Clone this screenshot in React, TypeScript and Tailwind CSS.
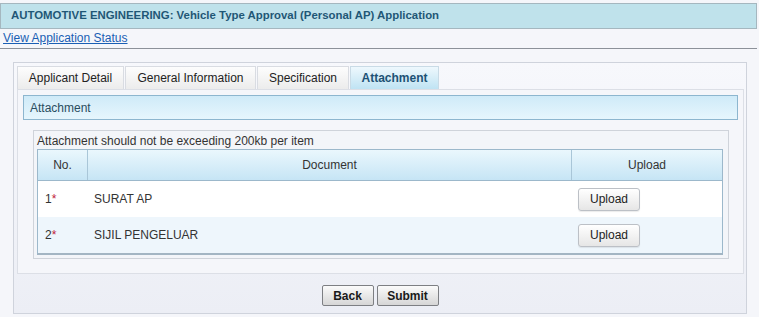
import React from "react";

const tabs = [
  { label: "Applicant Detail", w: "w-[107px]" },
  { label: "General Information", w: "w-[131px]" },
  { label: "Specification", w: "w-[92px]" },
];

function Row({ no, doc, alt }: { no: string; doc: string; alt?: boolean }) {
  return (
    <div className={`flex h-[36px] items-center ${alt ? "bg-[#eef6fc]" : "bg-white"}`}>
      <div className="w-[50px] pl-[7px] text-[#333]">
        {no}
        <span className="text-[#c0203a]">*</span>
      </div>
      <div className="w-[484px] pl-[6px] text-[#333]">{doc}</div>
      <div className="flex-1 pl-[6px]">
        <button className="h-[23px] w-[62px] rounded-[3px] border border-[#bcc0c6] bg-gradient-to-b from-[#ffffff] to-[#e6e6e6] text-[12px] text-[#222] shadow-[0_1px_1px_rgba(0,0,0,0.08)]">
          Upload
        </button>
      </div>
    </div>
  );
}

export default function App() {
  return (
    <div
      className="relative h-[317px] w-[759px] overflow-hidden bg-[#f5f6fa] text-[12px] leading-none"
      style={{ fontFamily: '"Liberation Sans", Arial, sans-serif' }}
    >
      <div className="mr-[2px] mt-[3px] flex h-[26px] items-center border border-[#a5b7bf] bg-[#bfe2eb] pl-[10px] text-[11.4px] font-bold text-[#1f5776]">
        AUTOMOTIVE ENGINEERING: Vehicle Type Approval (Personal AP) Application
      </div>
      <div className="flex h-[17px] items-center pl-[3px]">
        <a className="text-[#1a5fb4] underline" href="#">
          View Application Status
        </a>
      </div>
      <div className="mr-[2px] mt-[2px] border-t border-[#8c9199]" />

      <div className="ml-[13px] mt-[13px] h-[252px] w-[734px] border border-[#cfd3dc] bg-gradient-to-b from-[#f7f8fc] to-[#eceef5] pl-[3px] pt-[3px]">
        <div className="flex h-[23px] gap-[1px]">
          {tabs.map((t) => (
            <div
              key={t.label}
              className={`${t.w} flex items-center justify-center border border-b-0 border-[#d9dce2] bg-gradient-to-b from-[#fdfdfd] to-[#ececec] text-[#222]`}
            >
              {t.label}
            </div>
          ))}
          <div className="flex w-[89px] items-center justify-center border border-b-0 border-[#c9dbe6] bg-gradient-to-b from-[#eef8fd] to-[#bfe3f3] font-bold text-[#1d5275]">
            Attachment
          </div>
        </div>

        <div className="h-[185px] w-[727px] border border-[#dcdfe6] bg-[#f5f6fa] pt-[5px]">
          <div className="ml-[5px] flex h-[25px] w-[715px] items-center border border-[#8db6cf] bg-gradient-to-b from-[#cfeaf8] to-[#e6f6fd] pl-[6px] text-[#2a4d60]">
            Attachment
          </div>

          <div className="ml-[15px] mt-[10px] h-[129px] w-[696px] border border-[#cfd3da] bg-[#f3f5f9] pl-[3px] pr-[5px]">
            <div className="flex h-[18px] items-center pt-[2px] text-[#333]">
              Attachment should not be exceeding 200kb per item
            </div>
            <div className="w-[686px] border border-b-2 border-[#9cb8cb] border-b-[#a3b5c3]">
              <div className="flex h-[31px] items-center border-b border-[#9cb8cb] bg-gradient-to-b from-[#eaf7fd] to-[#c6e5f5] text-[#333]">
                <div className="flex h-full w-[50px] items-center justify-center border-r border-[#a9c6d8]">
                  No.
                </div>
                <div className="flex h-full w-[484px] items-center justify-center border-r border-[#a9c6d8]">
                  Document
                </div>
                <div className="flex h-full flex-1 items-center justify-center">Upload</div>
              </div>
              <Row no="1" doc="SURAT AP" />
              <Row no="2" doc="SIJIL PENGELUAR" alt />
            </div>
          </div>
        </div>

        <div className="mt-[11px] flex justify-center gap-[3px] pr-[3px]">
          <button className="h-[21px] w-[52px] rounded-[2px] border border-[#7d7f83] bg-gradient-to-b from-[#fbfbfb] to-[#d6d6d6] text-[12px] font-bold text-[#1a1a1a]">
            Back
          </button>
          <button className="h-[21px] w-[62px] rounded-[2px] border border-[#7d7f83] bg-gradient-to-b from-[#fbfbfb] to-[#d6d6d6] text-[12px] font-bold text-[#1a1a1a]">
            Submit
          </button>
        </div>
      </div>
    </div>
  );
}
